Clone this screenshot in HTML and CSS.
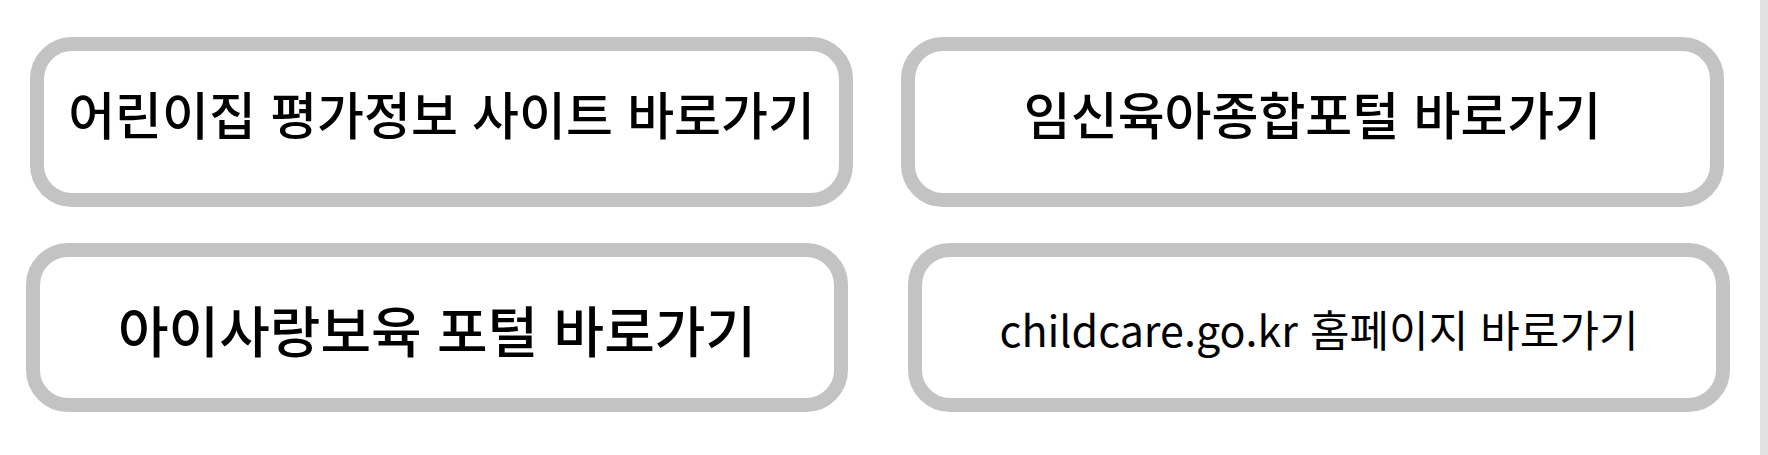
FILE: index.html
```html
<!DOCTYPE html>
<html lang="ko">
<head>
    <meta charset="UTF-8">
    <meta name="viewport" content="width=device-width, initial-scale=1.0">
    <title>보육 사이트 바로가기</title>
    <link rel="stylesheet" href="styles.css">
</head>
<body>
    <div class="page">
        <div class="link-board">
            <div class="link-row row-top">
                <a class="link-card" href="#">어린이집 평가정보 사이트 바로가기</a>
                <a class="link-card" href="#">임신육아종합포털 바로가기</a>
            </div>
            <div class="link-row row-bottom">
                <a class="link-card card-large" href="#">아이사랑보육 포털 바로가기</a>
                <a class="link-card card-small" href="#">childcare.go.kr 홈페이지 바로가기</a>
            </div>
        </div>
        <div class="scroll-track"></div>
    </div>
</body>
</html>
```

FILE: styles.css
```css
body {
    font-family: "Noto Sans CJK KR", "Noto Sans", sans-serif;
    margin: 0;
    padding: 0;
    background-color: #fff;
    color: #000;
}

.page {
    display: flex;
    height: 100vh;
    overflow: hidden;
}

.link-board {
    flex: 1;
    display: flex;
    flex-direction: column;
    gap: 36px;
    padding-top: 37px;
}

/* right-hand scrollbar track */
.scroll-track {
    width: 8px;
    background-color: #e1e1e1;
}

.link-row {
    display: flex;
}

.row-top {
    padding-left: 30px;
    gap: 48px;
}

.row-bottom {
    padding-left: 26px;
    gap: 60px;
}

.link-card {
    box-sizing: border-box;
    width: 823px;
    height: 170px;
    display: flex;
    align-items: center;
    justify-content: center;
    border: 14px solid #c3c3c3;
    border-radius: 42px;
    background: #fff;
    color: #000;
    text-decoration: none;
    font-size: 51px;
    font-weight: 500;
    white-space: nowrap;
}

.row-top .link-card {
    padding-bottom: 18px;
}

.row-bottom .link-card {
    width: 822px;
    height: 169px;
}

.card-large {
    font-size: 55px;
}

.card-small {
    font-size: 43px;
    font-weight: 400;
}
```
